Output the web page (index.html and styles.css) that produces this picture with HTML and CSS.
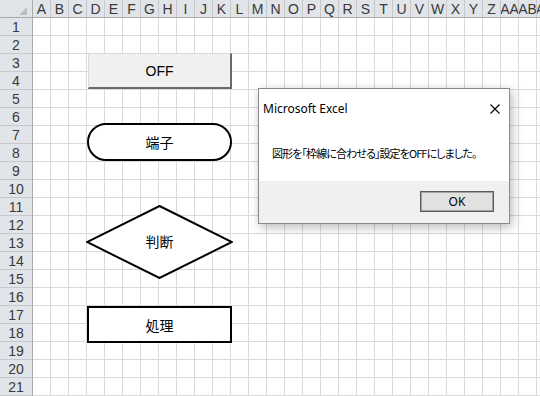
FILE: index.html
```html
<!DOCTYPE html>
<html lang="ja">
<head>
    <meta charset="UTF-8">
    <meta name="viewport" content="width=device-width, initial-scale=1.0">
    <title>Microsoft Excel</title>
    <link rel="stylesheet" href="styles.css">
</head>
<body>
    <div class="sheet">
        <div class="corner"><span class="select-all"></span></div>

        <div class="col-heads">
            <span>A</span><span>B</span><span>C</span><span>D</span><span>E</span><span>F</span><span>G</span>
            <span>H</span><span>I</span><span>J</span><span>K</span><span>L</span><span>M</span><span>N</span>
            <span>O</span><span>P</span><span>Q</span><span>R</span><span>S</span><span>T</span><span>U</span>
            <span>V</span><span>W</span><span>X</span><span>Y</span><span>Z</span><span>AA</span><span>AB</span>
            <span>AC</span>
        </div>

        <div class="row-heads">
            <span>1</span><span>2</span><span>3</span><span>4</span><span>5</span><span>6</span><span>7</span>
            <span>8</span><span>9</span><span>10</span><span>11</span><span>12</span><span>13</span><span>14</span>
            <span>15</span><span>16</span><span>17</span><span>18</span><span>19</span><span>20</span><span>21</span>
        </div>

        <div class="cells"></div>

        <!-- shapes placed on the sheet -->
        <div class="shape btn-off">OFF</div>
        <div class="shape terminator">端子</div>
        <div class="shape decision">
            <svg class="diamond" width="147" height="74" viewBox="0 0 147 74">
                <polygon points="73.5,1 146,37 73.5,73 1,37" fill="#fff" stroke="#000" stroke-width="2"/>
            </svg>
            <span>判断</span>
        </div>
        <div class="shape process">処理</div>

        <!-- message box -->
        <div class="dialog">
            <div class="dialog-title">
                <span>Microsoft Excel</span>
                <svg class="close" width="10" height="10" viewBox="0 0 10 10">
                    <path d="M0.5 0.5 L9.5 9.5 M9.5 0.5 L0.5 9.5" stroke="#000" stroke-width="1.1" fill="none"/>
                </svg>
            </div>
            <div class="dialog-body">
                <p>図形を「枠線に合わせる」設定をOFFにしました。</p>
            </div>
            <div class="dialog-foot">
                <button class="ok">OK</button>
            </div>
        </div>
    </div>
</body>
</html>
```

FILE: styles.css
```css
html, body {
    margin: 0;
    padding: 0;
    background: #fff;
}
body {
    font-family: 'Liberation Sans', Arial, sans-serif;
    overflow: hidden;
}
.sheet {
    position: relative;
    width: 540px;
    height: 396px;
    display: grid;
    grid-template-columns: 33px 1fr;
    grid-template-rows: 18px 1fr;
    overflow: hidden;
}
.corner {
    background: #e1e4e8;
    border-right: 1px solid #ababab;
    border-bottom: 1px solid #ababab;
    display: flex;
    justify-content: flex-end;
    align-items: flex-end;
    padding: 0 5px 2px 0;
}
.select-all {
    width: 0;
    height: 0;
    border-left: 8px solid transparent;
    border-bottom: 8px solid #bcbec2;
}
.col-heads {
    display: flex;
    background: #e1e4e8;
    border-bottom: 1px solid #ababab;
    overflow: hidden;
}
.col-heads span {
    flex: none;
    width: 18px;
    box-sizing: border-box;
    border-right: 1px solid #c6c8cc;
    display: flex;
    justify-content: center;
    align-items: center;
    overflow: hidden;
    white-space: nowrap;
    font-size: 14px;
    color: #3a3a3a;
}
.row-heads {
    display: flex;
    flex-direction: column;
    background: #e1e4e8;
    border-right: 1px solid #ababab;
}
.row-heads span {
    flex: none;
    height: 18px;
    box-sizing: border-box;
    border-bottom: 1px solid #c6c8cc;
    display: flex;
    justify-content: center;
    align-items: center;
    font-size: 14px;
    color: #3a3a3a;
}
.cells {
    background-image:
        repeating-linear-gradient(to right, transparent 0 17px, #dadada 17px 18px),
        repeating-linear-gradient(to bottom, transparent 0 17px, #dadada 17px 18px);
}

/* shapes */
.shape {
    position: absolute;
    box-sizing: border-box;
    display: flex;
    justify-content: center;
    align-items: center;
    font-family: 'Noto Sans CJK JP', sans-serif;
    font-size: 14px;
    color: #000;
}
.btn-off {
    left: 88px;
    top: 53px;
    width: 144px;
    height: 36px;
    background: #f0f0f0;
    border: 1px solid #dadada;
    border-right: 2px solid #6a6a6a;
    border-bottom: 2px solid #6a6a6a;
    font-family: 'Liberation Sans', Arial, sans-serif;
    font-size: 14px;
}
.terminator {
    left: 87px;
    top: 123px;
    width: 145px;
    height: 38px;
    background: #fff;
    border: 2px solid #000;
    border-radius: 19px;
}
.decision {
    left: 86px;
    top: 205px;
    width: 147px;
    height: 74px;
}
.decision .diamond {
    position: absolute;
    left: 0;
    top: 0;
}
.decision span {
    position: relative;
    margin-top: -2px;
}
.process {
    left: 87px;
    top: 306px;
    width: 145px;
    height: 37px;
    background: #fff;
    border: 2px solid #000;
}

/* message box */
.dialog {
    position: absolute;
    left: 258px;
    top: 88px;
    width: 252px;
    height: 136px;
    box-sizing: border-box;
    border: 1px solid #8a8a8a;
    background: #fff;
    box-shadow: 2px 3px 10px rgba(0, 0, 0, 0.28);
    display: flex;
    flex-direction: column;
    font-family: 'Noto Sans', 'Noto Sans CJK JP', sans-serif;
    color: #000;
}
.dialog-title {
    height: 40px;
    flex: none;
    display: flex;
    justify-content: space-between;
    align-items: center;
    padding: 0 9px 0 4px;
    font-size: 12px;
}
.dialog-title span {
    margin-top: -2px;
}
.dialog-body {
    height: 52px;
    flex: none;
    display: flex;
    align-items: center;
    padding: 0 0 4px 13px;
    box-sizing: border-box;
}
.dialog-body p {
    margin: 0;
    font-family: 'Noto Sans CJK JP', sans-serif;
    font-size: 11px;
    letter-spacing: -0.9px;
    font-feature-settings: "palt";
    white-space: nowrap;
}
.dialog-foot {
    flex: 1;
    background: #f0f0f0;
    display: flex;
    justify-content: flex-end;
    align-items: flex-start;
    padding: 10px 15px 0 0;
}
.ok {
    width: 74px;
    height: 21px;
    margin: 0;
    padding: 0;
    background: #e1e1e1;
    border: 1px solid #5a5a5a;
    box-shadow: inset 0 0 0 1px #a4a4a4;
    font-family: 'Noto Sans', sans-serif;
    font-size: 12px;
    color: #000;
}
```
